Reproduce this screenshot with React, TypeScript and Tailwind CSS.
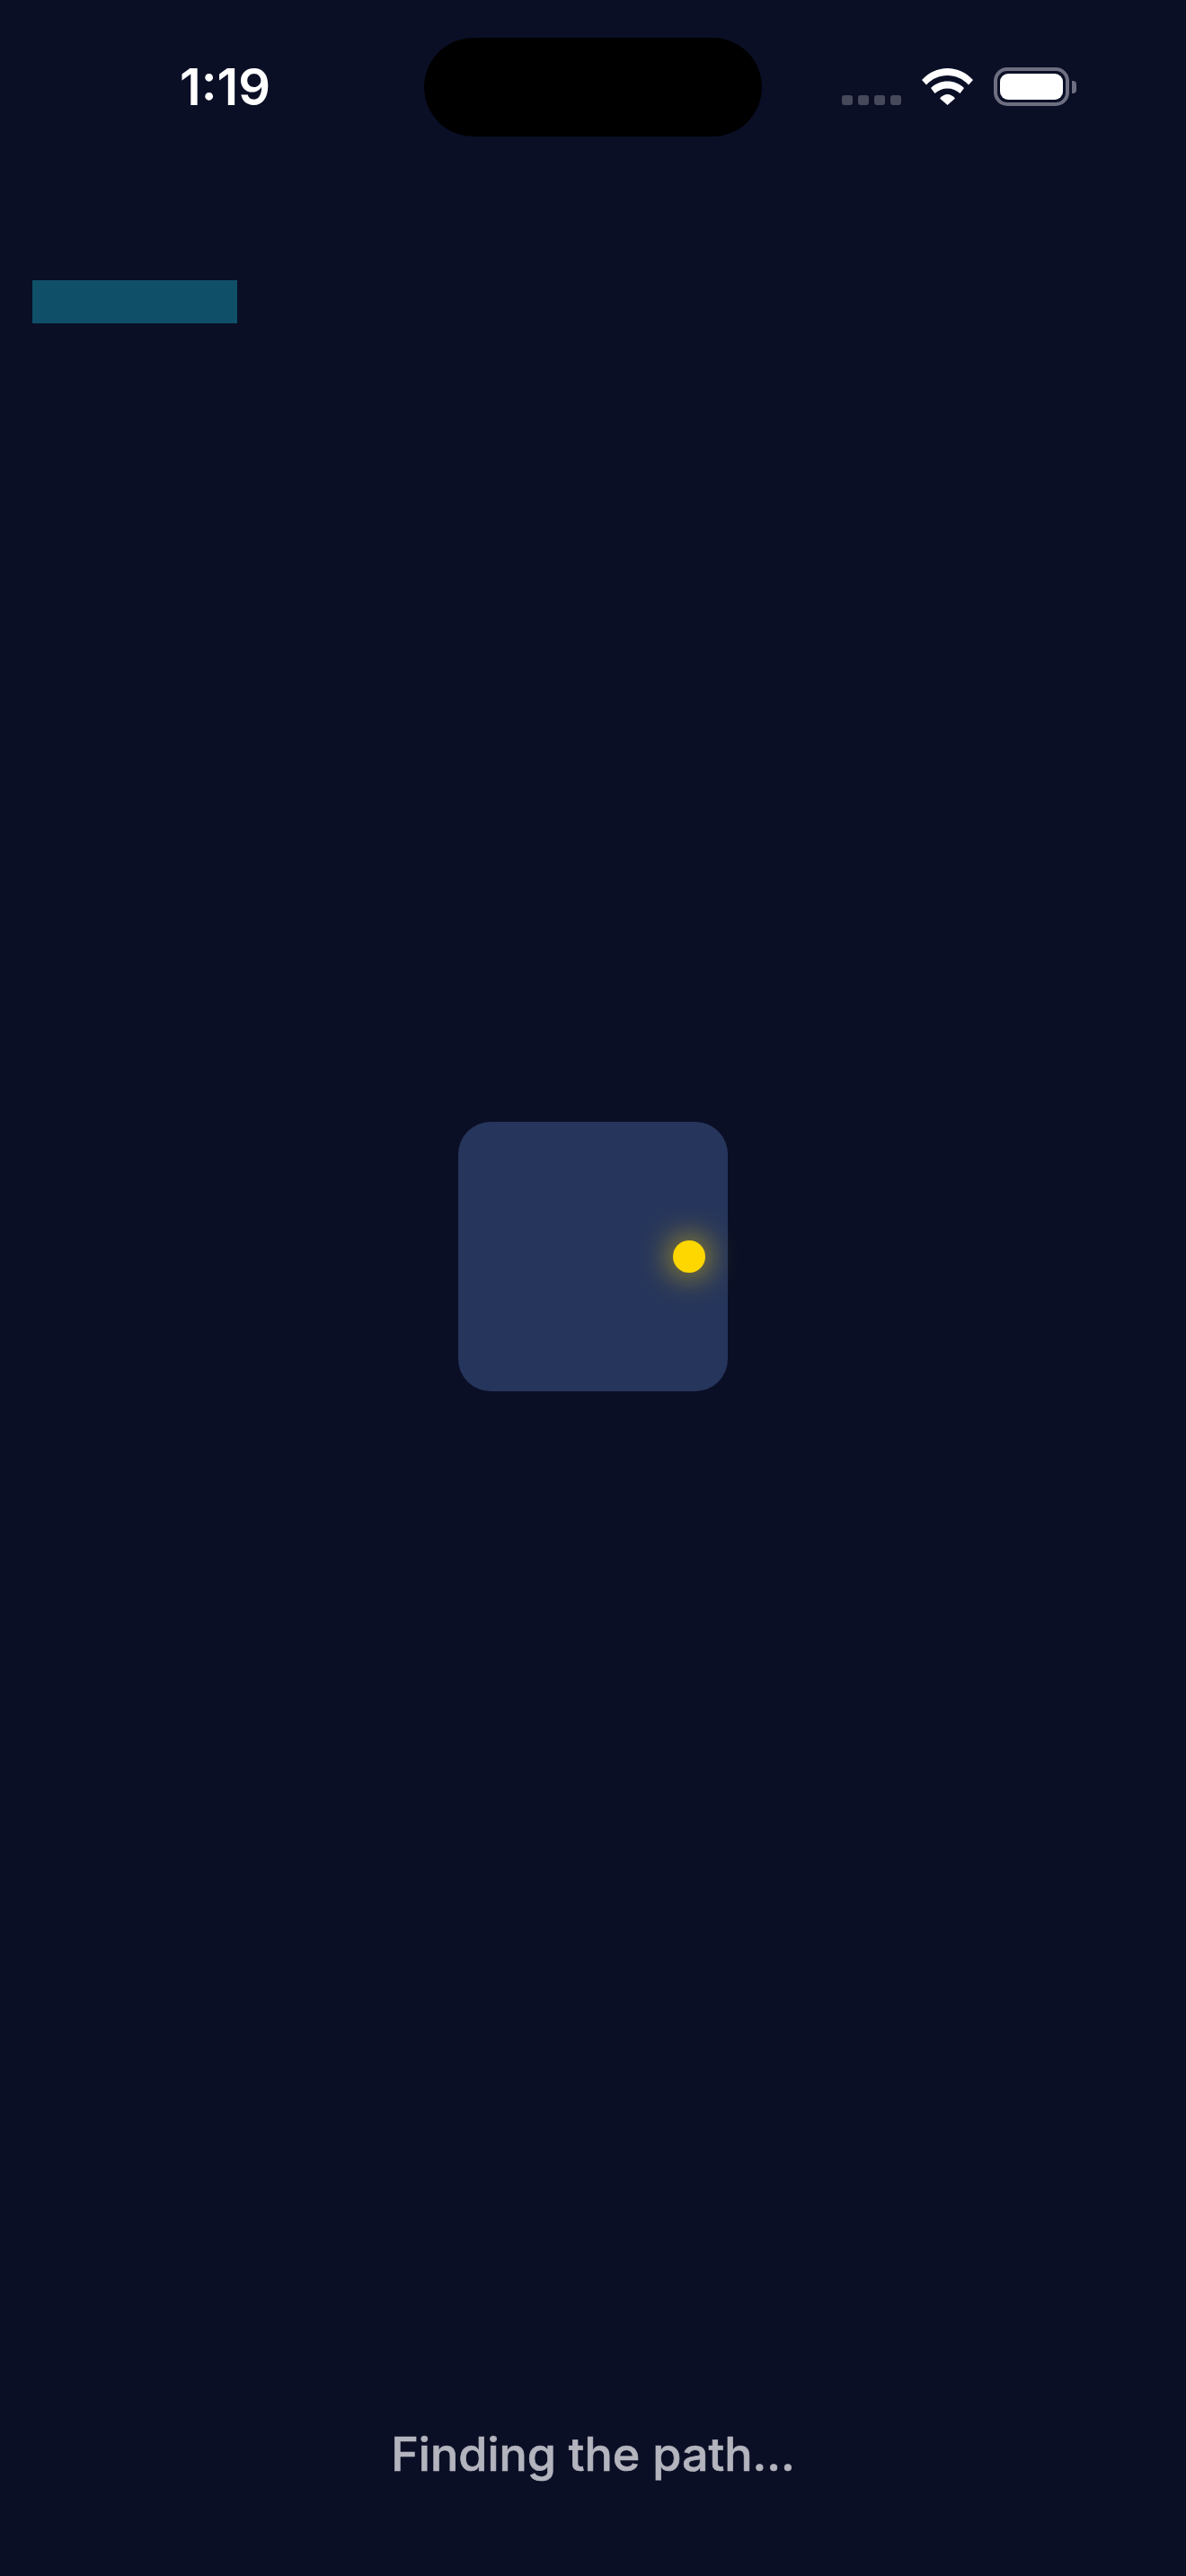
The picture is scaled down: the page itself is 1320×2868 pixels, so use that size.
export default function App() {
  return (
    <div className="flex h-[2868px] w-[1320px] flex-col overflow-hidden bg-[#0a0f26] font-['Inter',sans-serif]">
      {/* status bar */}
      <div className="flex h-[152px] pt-[42px]">
        <div className="w-[472px] pl-[200px] pt-[27px] text-[56px] leading-[56px] font-semibold text-white">
          1:19
        </div>
        <div className="h-[110px] w-[376px] rounded-[55px] bg-black" />
        <div className="relative flex h-[110px] flex-1 items-start pl-[89px] pt-[33px]">
          <div className="mt-[31px] flex gap-[6px]">
            <span className="h-[11px] w-[12px] rounded-[3px] bg-[#464959]" />
            <span className="h-[11px] w-[12px] rounded-[3px] bg-[#464959]" />
            <span className="h-[11px] w-[12px] rounded-[3px] bg-[#464959]" />
            <span className="h-[11px] w-[12px] rounded-[3px] bg-[#464959]" />
          </div>
          <svg className="ml-[23px] mt-[1px]" width="57" height="41" viewBox="0 0 57 41" fill="#fff">
            <path d="M0 13C7.5 5 17.5 0 28.5 0S49.5 5 57 13L52 18.5C45.5 11.5 37.5 8 28.5 8S11.5 11.500 5 18.5Z" />
            <path d="M10 22C15 17 21.500 14.500 28.500 14.500S42 17 47 22L42.500 28C38.500 24.500 34 22.500 28.500 22.500S18.500 24.500 14.500 28Z" />
            <path d="M20 33.500C22.500 30.500 25.500 29 28.500 29S34.500 30.500 37 33.500L28.500 41Z" />
          </svg>
          <div className="ml-[23px] flex items-center">
            <div className="h-[43px] w-[84px] rounded-[15px] border-[4px] border-[#6d6f80] p-[3px]">
              <div className="h-full w-full rounded-[9px] bg-white" />
            </div>
            <div className="ml-[3px] h-[14px] w-[5px] rounded-r-[4px] bg-[#6d6f80]" />
          </div>
        </div>
      </div>

      <div className="ml-[36px] mt-[160px] h-[48px] w-[228px] bg-[#0f5068]" />

      <div className="mt-[889px] flex h-[300px] w-[300px] items-center justify-end self-center rounded-[36px] bg-[#26355b] pr-[25px]">
        <div className="h-[36px] w-[36px] rounded-full bg-[#ffd700] shadow-[0_0_36px_rgba(255,215,0,0.9)]" />
      </div>

      <div className="mt-[1154px] text-center text-[52px] leading-[60px] font-medium text-[#b3b4bd] [-webkit-text-stroke:0.7px_#b3b4bd]">
        Finding the path...
      </div>
    </div>
  );
}
